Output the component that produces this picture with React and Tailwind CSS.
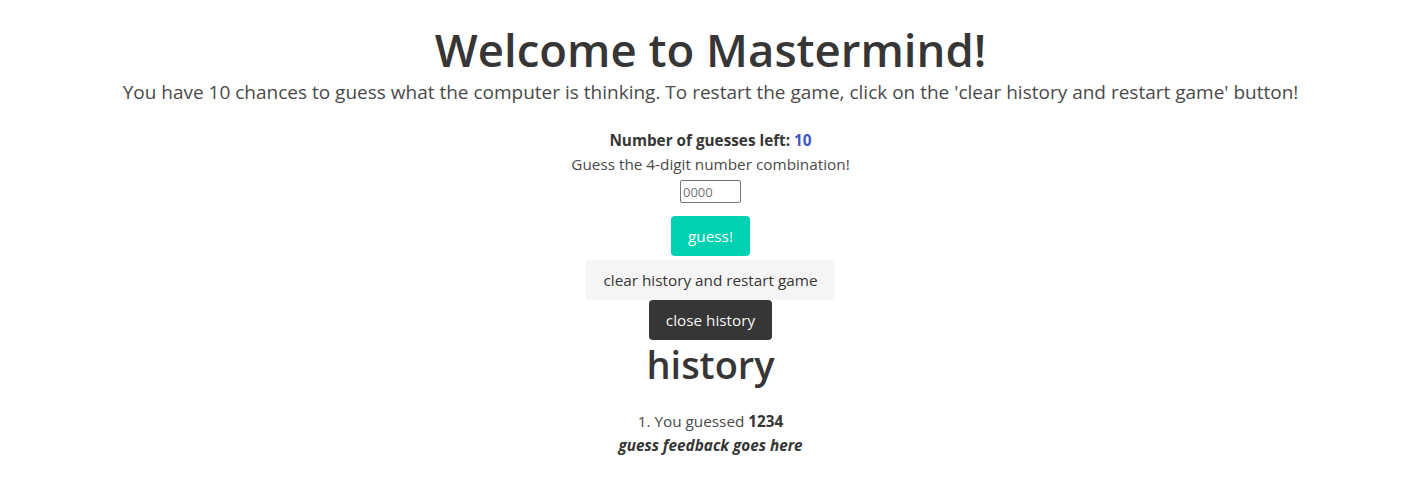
export default function App() {
  return (
    <div className="min-h-[477px] bg-white text-center text-[15.3px] leading-[24px] text-[#4a4a4a] [font-family:'Open_Sans',sans-serif]">
      <div className="pt-[22px]">
        <h1 className="text-[45.5px] font-semibold leading-[54px] text-[#363636]">Welcome to Mastermind!</h1>
        <p className="mt-[4px] text-[19px] leading-[25px] text-[#4a4a4a]">
          You have 10 chances to guess what the computer is thinking. To restart the game, click on the 'clear history and restart game' button!
        </p>
      </div>

      <div className="mt-[23px] flex flex-col items-center">
        <p className="font-bold text-[#363636]">
          Number of guesses left: <span className="text-[#3e56c4]">10</span>
        </p>
        <p>Guess the 4-digit number combination!</p>
        <input
          className="mt-[4px] h-[23px] w-[61px] rounded-[2px] border border-[#767676] px-[2px] text-[13px] text-[#363636] placeholder:text-[#757575]"
          placeholder="0000"
        />
        <button className="mt-[13px] h-[40px] rounded-[4px] bg-[#00d1b2] px-[17px] text-white">guess!</button>
        <button className="mt-[4px] h-[40px] rounded-[4px] bg-[#f5f5f5] px-[17px] text-[#363636]">clear history and restart game</button>
        <button className="h-[40px] rounded-[4px] bg-[#363636] px-[17px] text-[#f5f5f5]">close history</button>
        <h2 className="mt-[2px] text-[38px] font-semibold leading-[45px] text-[#363636]">history</h2>
        <ol className="mt-[22px]">
          <li>
            1. You guessed <strong className="text-[#363636]">1234</strong>
          </li>
          <li className="font-bold italic text-[#363636]">guess feedback goes here</li>
        </ol>
      </div>
    </div>
  )
}
